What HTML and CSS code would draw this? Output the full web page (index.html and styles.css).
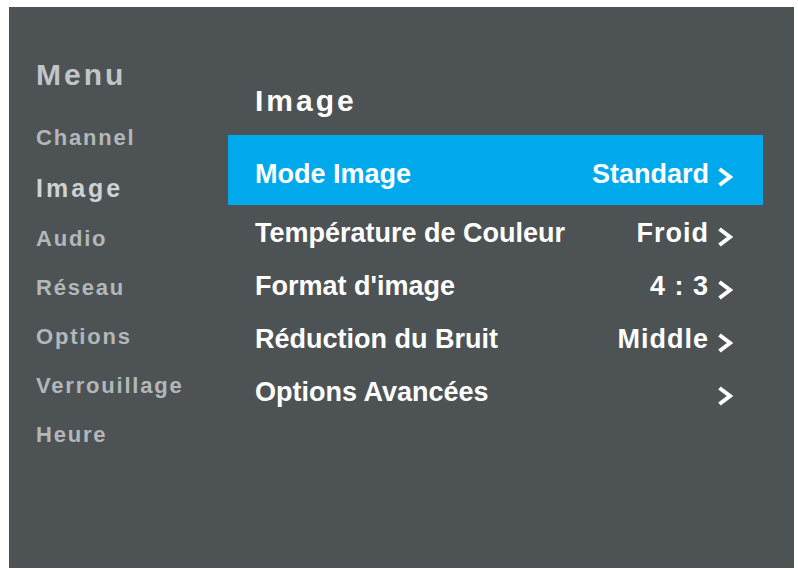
FILE: index.html
```html
<!DOCTYPE html>
<html lang="fr">
<head>
<meta charset="utf-8">
<title>Image</title>
<link rel="stylesheet" href="styles.css">
</head>
<body>
<div class="panel">
  <nav class="sidebar">
    <div class="menu-title">Menu</div>
    <ul class="nav">
      <li class="nav-item">Channel</li>
      <li class="nav-item active">Image</li>
      <li class="nav-item">Audio</li>
      <li class="nav-item">Réseau</li>
      <li class="nav-item">Options</li>
      <li class="nav-item">Verrouillage</li>
      <li class="nav-item">Heure</li>
    </ul>
  </nav>
  <main class="content">
    <h1 class="content-title">Image</h1>
    <ul class="list">
      <li class="row active">
        <span class="label">Mode Image</span>
        <span class="value">Standard<svg class="chev" viewBox="0 0 16 22"><polyline points="2.5,3 13,11 2.5,19"/></svg></span>
      </li>
      <li class="row">
        <span class="label">Température de Couleur</span>
        <span class="value">Froid<svg class="chev" viewBox="0 0 16 22"><polyline points="2.5,3 13,11 2.5,19"/></svg></span>
      </li>
      <li class="row">
        <span class="label">Format d'image</span>
        <span class="value">4 : 3<svg class="chev" viewBox="0 0 16 22"><polyline points="2.5,3 13,11 2.5,19"/></svg></span>
      </li>
      <li class="row">
        <span class="label">Réduction du Bruit</span>
        <span class="value">Middle<svg class="chev" viewBox="0 0 16 22"><polyline points="2.5,3 13,11 2.5,19"/></svg></span>
      </li>
      <li class="row">
        <span class="label">Options Avancées</span>
        <span class="value"><svg class="chev" viewBox="0 0 16 22"><polyline points="2.5,3 13,11 2.5,19"/></svg></span>
      </li>
    </ul>
  </main>
</div>
</body>
</html>
```

FILE: styles.css
```css
* { box-sizing: border-box; }

html, body {
  margin: 0;
  padding: 0;
  background: #ffffff;
}

body {
  width: 798px;
  height: 573px;
  overflow: hidden;
  font-family: "Liberation Sans", Arial, Helvetica, sans-serif;
  font-weight: bold;
}

.panel {
  margin: 7px 4px 0 9px;
  width: 785px;
  height: 561px;
  background: #4d5355;
  display: flex;
}

.sidebar {
  width: 219px;
  flex-shrink: 0;
  padding: 48px 0 0 27px;
}

.menu-title {
  font-size: 30px;
  line-height: 40px;
  letter-spacing: 3px;
  color: #c2c5c8;
  margin-bottom: 18px;
}

.nav {
  list-style: none;
  margin: 0;
  padding: 0;
}

.nav-item {
  font-size: 22px;
  height: 49px;
  line-height: 49px;
  letter-spacing: 1.8px;
  color: #b3b7ba;
}

.nav-item.active {
  font-size: 25px;
  height: 52px;
  line-height: 52px;
  letter-spacing: 3px;
  color: #cfd2d4;
}

.content {
  width: 535px;
  flex-shrink: 0;
  padding-top: 74px;
}

.content-title {
  margin: 0 0 14px;
  padding-left: 27px;
  font-size: 30px;
  line-height: 40px;
  letter-spacing: 3px;
  color: #ffffff;
  font-weight: bold;
}

.list {
  list-style: none;
  margin: 0;
  padding: 0;
}

.row {
  display: flex;
  justify-content: space-between;
  align-items: center;
  height: 53px;
  line-height: 53px;
  padding: 0 30px 0 27px;
  font-size: 27px;
  color: #ffffff;
}

.row:nth-child(2) {
  margin-top: 2px;
}

.row.active {
  height: 70px;
  line-height: 62px;
  padding-top: 8px;
  background: #00a9eb;
}

.value {
  display: flex;
  align-items: center;
  letter-spacing: 1px;
}

.row.active .value {
  letter-spacing: 0;
}

.chev {
  flex-shrink: 0;
  display: block;
  width: 16px;
  height: 22px;
  margin: 6px 0 0 8px;
  fill: none;
  stroke: #ffffff;
  stroke-width: 4;
  stroke-linecap: butt;
  stroke-linejoin: miter;
}
```
